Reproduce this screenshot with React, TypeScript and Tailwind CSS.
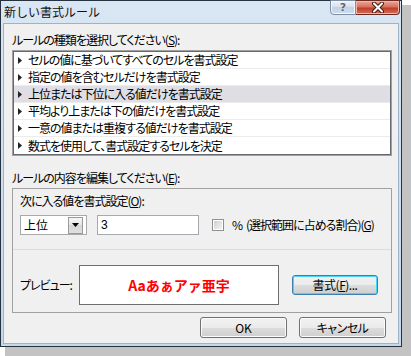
import React from 'react';

const rules = [
  'セルの値に基づいてすべてのセルを書式設定',
  '指定の値を含むセルだけを書式設定',
  '上位または下位に入る値だけを書式設定',
  '平均より上または下の値だけを書式設定',
  '一意の値または重複する値だけを書式設定',
  '数式を使用して、書式設定するセルを決定',
];

const btn =
  'flex items-center justify-center rounded-[3px] border border-[#707070] bg-[linear-gradient(to_bottom,#f2f2f2_0%,#ebebeb_50%,#dddddd_50%,#cfcfcf_100%)] shadow-[inset_0_0_0_1px_#fcfcfc] text-[12px] leading-none text-black';

export default function App() {
  return (
    <div className="w-[411px] h-[356px] bg-white overflow-hidden font-['Noto_Sans_CJK_JP','Noto_Sans_CJK_SC',sans-serif] [font-feature-settings:'palt'] text-[12px] text-black">
      {/* ウィンドウ枠 */}
      <div className="w-[402px] h-[347px] border border-[#26323e] bg-[linear-gradient(to_bottom,#d9e6f4,#c5d8ec)] shadow-[7px_7px_0_2px_#c3c3c3] flex flex-col">
        {/* タイトルバー */}
        <div className="h-[22px] flex items-start justify-between shrink-0">
          <div className="pl-[3px] pt-[3px] leading-[16px] [font-feature-settings:normal] text-[#101010]">新しい書式ルール</div>
          <div className="flex -mt-[1px] mr-[1px]">
            <div className="w-[26px] h-[15px] rounded-bl-[4px] border border-[#7d8ea3] bg-[linear-gradient(to_bottom,#eef3f9,#d3e0ee_50%,#c2d3e7_50%,#cfdcec)] shadow-[inset_0_0_0_1px_#f4f8fc] flex items-center justify-center">
              <span className="font-['DejaVu_Sans',sans-serif] font-bold text-[11px] leading-none text-[#5a6676] [text-shadow:0_0_1px_#fff]">?</span>
            </div>
            <div className="w-[44px] h-[15px] rounded-br-[4px] border border-l-0 border-[#6b2b22] bg-[linear-gradient(to_bottom,#e9a99a,#d7715f_45%,#c43c28_55%,#d4705a)] shadow-[inset_0_0_0_1px_#eeb8aa] flex items-center justify-center">
              <svg width="14" height="11" viewBox="0 0 14 11">
                <path d="M3 1.5 L11 9.5 M11 1.5 L3 9.5" stroke="#4a1a12" strokeWidth="4" strokeLinecap="round" />
                <path d="M3 1.5 L11 9.5 M11 1.5 L3 9.5" stroke="#ffffff" strokeWidth="2" strokeLinecap="round" />
              </svg>
            </div>
          </div>
        </div>

        {/* クライアント領域 */}
        <div className="mx-[2px] h-[321px] border border-[#9fb3c8] bg-[#f0f0f0] flex flex-col pl-[8px]">
          <div className="mt-[8px] h-[16px] leading-[16px] tracking-[-1px]">
            ルールの種類を選択してください(<span className="underline">S</span>):
          </div>

          {/* ルールの種類リスト */}
          <div className="mt-[2px] w-[380px] h-[106px] border border-[#a0a0a0]">
            <div className="h-full border border-[#666a70] bg-white flex flex-col">
              {rules.map((r, i) => (
                <div
                  key={r}
                  className={`h-[17px] shrink-0 flex items-center ${i < rules.length - 1 ? 'border-b border-[#ececec]' : ''} ${i === 2 ? 'bg-[#dedee4]' : ''}`}
                >
                  <svg width="4" height="7" viewBox="0 0 4 7" className="ml-[4px] shrink-0">
                    <path d="M0 0 L4 3.5 L0 7 Z" fill="#222" />
                  </svg>
                  <span className="ml-[6px] leading-[16px] whitespace-nowrap tracking-[-1px]">{r}</span>
                </div>
              ))}
            </div>
          </div>

          <div className="mt-[14px] h-[16px] leading-[16px] tracking-[-1px]">
            ルールの内容を編集してください(<span className="underline">E</span>):
          </div>

          {/* ルールの内容 */}
          <div className="mt-[2px] w-[380px] h-[125px] border border-[#a0a0a0] flex flex-col">
            <div className="pl-[7px] pt-[4px] h-[20px] leading-[16px] tracking-[-1px]">
              次に入る値を書式設定(<span className="underline">O</span>):
            </div>
            <div className="mt-[6px] pl-[7px] flex items-center h-[20px]">
              <div className="w-[67px] h-[20px] border border-[#a9a9a9] bg-white flex items-center justify-between">
                <span className="pl-[3px] leading-[16px]">上位</span>
                <div className="mr-[3px] w-[15px] h-[17px] border border-[#9a9a9a] bg-[linear-gradient(to_bottom,#f6f6f6,#e4e4e4_50%,#d6d6d6_50%,#e0e0e0)] flex items-center justify-center">
                  <svg width="7" height="4" viewBox="0 0 7 4">
                    <path d="M0 0 L7 0 L3.5 4 Z" fill="#000" />
                  </svg>
                </div>
              </div>
              <div className="ml-[10px] w-[102px] h-[20px] border border-[#a5a9b0] bg-white flex items-center">
                <span className="pl-[3px] leading-[16px] font-['Liberation_Sans',sans-serif]">3</span>
              </div>
              <div className="ml-[13px] w-[12px] h-[12px] border border-[#8e8f8f] bg-white p-[1px]">
                <div className="w-full h-full bg-[linear-gradient(135deg,#cfcfcf,#f4f4f4)]" />
              </div>
              <span className="ml-[8px] leading-[16px] whitespace-nowrap tracking-[-1px]">%</span>
              <span className="ml-[4px] leading-[16px] whitespace-nowrap tracking-[-1px]">
                (選択範囲に占める割合)(<span className="underline">G</span>)
              </span>
            </div>
            <div className="mt-[14px] h-[1px] bg-[#dcdcdc] shrink-0" />
            <div className="mt-[15px] pl-[7px] flex items-center h-[40px]">
              <span className="w-[59px] leading-[16px] tracking-[-1px]">プレビュー:</span>
              <div className="w-[200px] h-[40px] border border-[#6e6e6e] bg-white flex items-center justify-center">
                <span className="font-bold text-[14px] leading-none text-[#ff0000] [font-feature-settings:normal]">
                  Aaあぁアァ亜宇
                </span>
              </div>
              <div className="ml-[13px] w-[86px] h-[20px] rounded-[3px] border border-[#3c7fb1] bg-[linear-gradient(to_bottom,#f2f2f2_0%,#ebebeb_50%,#dddddd_50%,#cfcfcf_100%)] shadow-[inset_0_0_0_1px_#48d5fc] flex items-center justify-center leading-none tracking-[-0.5px]">
                書式(<span className="underline">F</span>)...
              </div>
            </div>
          </div>

          {/* OK / キャンセル */}
          <div className="mt-[4px] ml-[188px] flex gap-[12px]">
            <div className={`${btn} w-[87px] h-[21px]`}>OK</div>
            <div className={`${btn} w-[87px] h-[21px] tracking-[-0.5px]`}>キャンセル</div>
          </div>
        </div>
      </div>
    </div>
  );
}
